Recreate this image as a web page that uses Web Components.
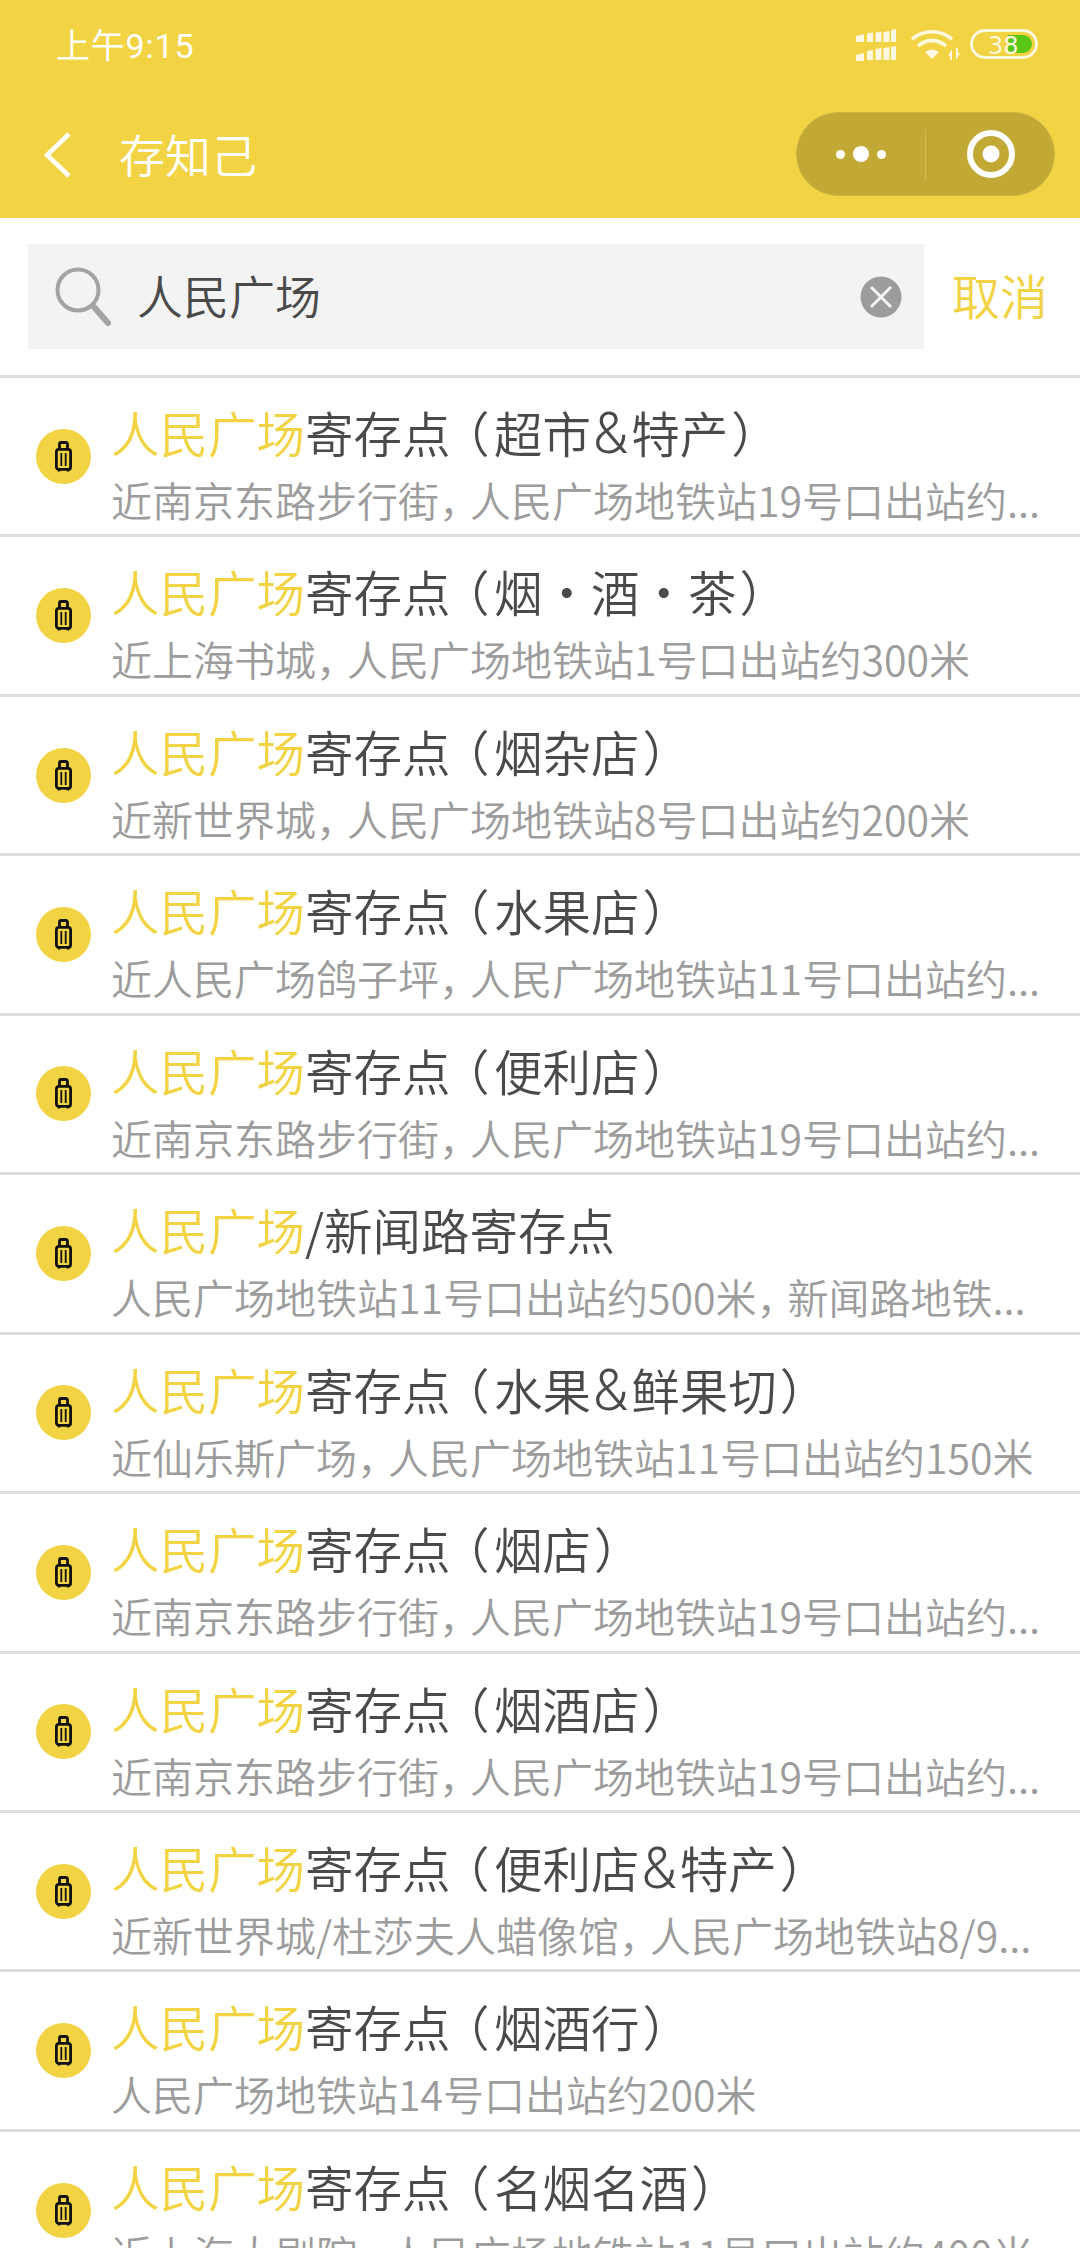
<!DOCTYPE html>
<html lang="zh-CN">
<head>
<meta charset="utf-8">
<style>
  html, body { margin: 0; padding: 0; background: #fff; }
  body { width: 1080px; height: 2248px; overflow: hidden; font-family: "Noto Sans CJK SC", "Noto Sans", sans-serif; }
</style>
</head>
<body>
<app-header></app-header>
<search-bar value="人民广场"></search-bar>
<result-list>
  <result-item kw="人民广场" name="寄存点（超市&amp;特产）" desc="近南京东路步行街，人民广场地铁站19号口出站约..."></result-item>
  <result-item kw="人民广场" name="寄存点（烟・酒・茶）" desc="近上海书城，人民广场地铁站1号口出站约300米"></result-item>
  <result-item kw="人民广场" name="寄存点（烟杂店）" desc="近新世界城，人民广场地铁站8号口出站约200米"></result-item>
  <result-item kw="人民广场" name="寄存点（水果店）" desc="近人民广场鸽子坪，人民广场地铁站11号口出站约..."></result-item>
  <result-item kw="人民广场" name="寄存点（便利店）" desc="近南京东路步行街，人民广场地铁站19号口出站约..."></result-item>
  <result-item kw="人民广场" name="/新闻路寄存点" desc="人民广场地铁站11号口出站约500米，新闻路地铁..."></result-item>
  <result-item kw="人民广场" name="寄存点（水果&amp;鲜果切）" desc="近仙乐斯广场，人民广场地铁站11号口出站约150米"></result-item>
  <result-item kw="人民广场" name="寄存点（烟店）" desc="近南京东路步行街，人民广场地铁站19号口出站约..."></result-item>
  <result-item kw="人民广场" name="寄存点（烟酒店）" desc="近南京东路步行街，人民广场地铁站19号口出站约..."></result-item>
  <result-item kw="人民广场" name="寄存点（便利店&amp;特产）" desc="近新世界城/杜莎夫人蜡像馆，人民广场地铁站8/9..."></result-item>
  <result-item kw="人民广场" name="寄存点（烟酒行）" desc="人民广场地铁站14号口出站约200米"></result-item>
  <result-item kw="人民广场" name="寄存点（名烟名酒）" desc="近上海大剧院，人民广场地铁站11号口出站约400米"></result-item>
</result-list>

<script>
const luggageIcon = `
<svg width="17" height="31" viewBox="0 0 17 31" fill="none">
  <path d="M4.500 9V3a1.500 1.500 0 0 1 1.500-1.500h5A1.500 1.500 0 0 1 12.500 3v6" stroke="#111" stroke-width="2.800"/>
  <rect x="1.400" y="8.400" width="14.200" height="20" rx="2.500" stroke="#111" stroke-width="2.800"/>
  <path d="M6.300 12v13M10.700 12v13" stroke="#111" stroke-width="1.800"/>
  <path d="M4 28.500v2M13 28.500v2" stroke="#111" stroke-width="2.400"/>
</svg>`;

class AppHeader extends HTMLElement {
    connectedCallback() {
        if (!this.shadowRoot) this.attachShadow({mode: 'open'}).innerHTML = this.template;
    }

    get template() {
        return `
        <style>
            :host { display: block; height: 218px; background: #f2d343; color: #fff; }
            .status { height: 92px; box-sizing: border-box; padding: 26px 40px 0 56px; display: flex; align-items: flex-start; justify-content: space-between; }
            .time { font-size: 34px; line-height: 40px; font-weight: 400; font-family: Roboto, "Noto Sans CJK SC", sans-serif; letter-spacing: .8px; }
            .icons { display: flex; align-items: flex-start; margin-top: 3px; }
            .nav { height: 126px; box-sizing: border-box; padding: 0 25px 0 44px; display: flex; align-items: center; }
            .title { font-size: 46px; font-weight: 350; margin-left: 45px; line-height: 60px; margin-top: -5px; }
            .pill { margin-left: auto; width: 259px; height: 84px; box-sizing: border-box; border-radius: 42px; background: #c2a835; border: 1px solid #cdb443; display: flex; align-items: center; margin-top: -2px; }
            .more { width: 128px; display: flex; justify-content: center; align-items: center; gap: 8px; }
            .more i { display: block; background: #fff; border-radius: 50%; width: 9px; height: 9px; }
            .more i.big { width: 16px; height: 16px; }
            .sep { width: 1px; height: 51px; background: #d2bb56; }
            .close { flex: 1; display: flex; justify-content: center; padding-left: 2px; }
        </style>
        <div class="status">
            <span class="time">上午9:15</span>
            <div class="icons">
                <svg width="184" height="34" viewBox="0 0 184 34" fill="#fff8e0">
                    <path d="M0 7l8-2v8H0zM11 4.500l6-1V13h-6zM19.500 3.500l6-1V13h-6zM0 26l8-2v8H0z"/>
                    <path d="M11 22l6-1v10h-6zM19.500 20l6-1v12h-6zM27.500 3l6-1v11h-6zM27.500 19l6-1v13h-6zM35 1l5-1v13h-5zM35 18l5-1v14h-5z"/>
                    <g fill="none" stroke="#fff8e0" stroke-width="3.600">
                        <path d="M56 10a31 31 0 0 1 40 0"/>
                        <path d="M62 17a21 21 0 0 1 28 0"/>
                    </g>
                    <path d="M69 23a11 11 0 0 1 14 0l-7 7z"/>
                    <path d="M96 31V20l-4 7h2v4zM100 19v12l4-7h-2v-5z"/>
                    <rect x="115.500" y="1.500" width="65" height="27" rx="13.500" fill="none" stroke="#fff8e0" stroke-width="3"/>
                    <path d="M152 6h15a9 9 0 0 1 0 18h-15z" fill="#5ac615"/>
                    <text x="132" y="25" font-family="'DejaVu Sans', sans-serif" font-size="24" fill="#fff8e0">38</text>
                </svg>
            </div>
        </div>
        <div class="nav">
            <svg width="30" height="46" viewBox="0 0 30 46" fill="none"><path d="M25 2 L3 23 L25 44" stroke="#fff" stroke-width="4.500"/></svg>
            <span class="title">存知己</span>
            <div class="pill">
                <div class="more"><i></i><i class="big"></i><i></i></div>
                <div class="sep"></div>
                <div class="close">
                    <svg width="48" height="48" viewBox="0 0 48 48"><circle cx="24" cy="24" r="21" fill="none" stroke="#fff" stroke-width="6"/><circle cx="24" cy="24" r="8.500" fill="#fff"/></svg>
                </div>
            </div>
        </div>`;
    }
}

class SearchBar extends HTMLElement {
    connectedCallback() {
        if (!this.shadowRoot) this.attachShadow({mode: 'open'}).innerHTML = this.template;
    }

    get template() {
        return `
        <style>
            :host { display: block; height: 157px; box-sizing: border-box; padding: 26px 0 0 28px; }
            .row { display: flex; align-items: center; }
            .box { width: 896px; height: 105px; background: #f3f3f3; display: flex; align-items: center; box-sizing: border-box; padding: 0 22px 0 26px; }
            .text { font-size: 46px; color: #4a4a4a; margin-left: 23px; flex: 1; line-height: 60px; font-weight: 350; margin-top: -5px; }
            .cancel { font-size: 48px; color: #f2d343; margin-left: 28px; line-height: 60px; font-weight: 350; margin-top: -5px; }
        </style>
        <div class="row">
            <div class="box">
                <svg width="60" height="64" viewBox="0 0 60 64" fill="none">
                    <circle cx="24" cy="25" r="20.500" stroke="#a3a3a3" stroke-width="4"/>
                    <path d="M40 42 L54 58" stroke="#a3a3a3" stroke-width="6" stroke-linecap="round"/>
                </svg>
                <span class="text">${this.getAttribute('value')}</span>
                <svg width="42" height="42" viewBox="0 0 42 42"><circle cx="21" cy="21" r="20.500" fill="#9c9c9c"/><path d="M11 11L31 31M31 11L11 31" stroke="#f3f3f3" stroke-width="3"/></svg>
            </div>
            <span class="cancel">取消</span>
        </div>`;
    }
}

class ResultList extends HTMLElement {
    connectedCallback() {
        if (!this.shadowRoot) this.attachShadow({mode: 'open'}).innerHTML = `
        <style>:host { display: block; border-top: 3px solid #ddd; }</style>
        <slot></slot>`;
    }
}

class ResultItem extends HTMLElement {
    connectedCallback() {
        if (!this.shadowRoot) this.attachShadow({mode: 'open'}).innerHTML = this.template;
    }

    // brackets, ampersand and comma are tighter or looser than the font's own cells
    get nameHtml() {
        return this.getAttribute('name')
            .replace(/&/g, '<span class="amp">&amp;</span>')
            .replace(/（/g, '<span class="open">（</span>')
            .replace(/）/g, '<span class="shut">）</span>');
    }

    get descHtml() {
        return this.getAttribute('desc').replace(/，/g, '<span class="comma">，</span>');
    }

    get template() {
        return `
        <style>
            :host { display: flex; height: 159.45px; box-sizing: border-box; border-bottom: 3px solid #ddd; padding-left: 36px; }
            .badge { width: 55px; height: 55px; border-radius: 50%; background: #f2d343; display: flex; align-items: center; justify-content: center; flex: none; align-self: center; }
            .body { margin-left: 20px; padding-top: 19px; }
            .name { font-size: 48.500px; line-height: 70px; color: #4a4a4a; font-weight: 350; white-space: nowrap; }
            .kw { color: #f2d343; }
            .open { margin: 0 4.500px 0 -9.500px; }
            .shut { margin-left: 3px; }
            .amp { font-family: Roboto, sans-serif; font-size: 57px; line-height: 0; font-weight: 300; letter-spacing: 3px; margin-left: 2px; }
            .desc { font-size: 41px; line-height: 58px; margin-top: 3px; color: #9c9c9c; font-weight: 350; white-space: nowrap; }
            .comma { letter-spacing: -10px; }
        </style>
        <div class="badge">${luggageIcon}</div>
        <div class="body">
            <div class="name"><span class="kw">${this.getAttribute('kw')}</span>${this.nameHtml}</div>
            <div class="desc">${this.descHtml}</div>
        </div>`;
    }
}

window.customElements.define('app-header', AppHeader);
window.customElements.define('search-bar', SearchBar);
window.customElements.define('result-list', ResultList);
window.customElements.define('result-item', ResultItem);
</script>
</body>
</html>
